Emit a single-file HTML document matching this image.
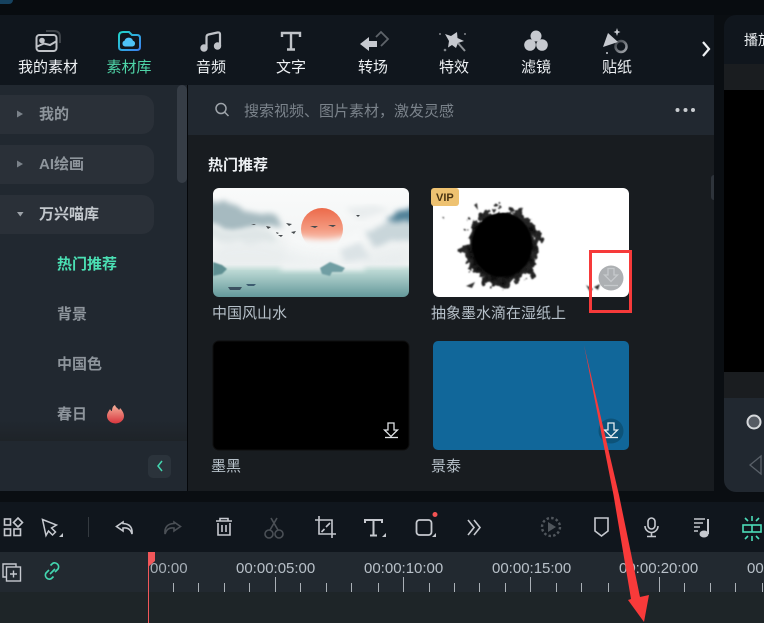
<!DOCTYPE html>
<html><head><meta charset="utf-8">
<style>
html,body{margin:0;padding:0;background:#0a0e12;}
#r{position:relative;width:764px;height:623px;overflow:hidden;background:#0a0e12;font-family:"Liberation Sans","Noto Sans CJK SC",sans-serif;}
.b{position:absolute;}
.t{position:absolute;white-space:nowrap;font-size:15px;line-height:20px;transform:translateX(-50%);color:#eef1f4;}
.l{position:absolute;white-space:nowrap;font-size:15px;line-height:20px;}
svg{position:absolute;left:0;top:0;}
</style></head><body><div id="r">
<div class="b" style="left:0;top:0;width:764px;height:15px;background:#080c10"></div>
<div class="b" style="left:0;top:0;width:13px;height:4px;background:#16425f;border-radius:0 0 8px 0"></div>
<div class="b" style="left:0;top:15px;width:714px;height:70px;background:#10161d"></div>
<div class="b" style="left:0;top:85px;width:187px;height:406px;background:linear-gradient(#212830 0,#212830 335px,#1e2328 356px)"></div>
<div class="b" style="left:187px;top:85px;width:1px;height:406px;background:#05070a"></div>
<div class="b" style="left:188px;top:85px;width:526px;height:50px;background:#212830"></div>
<div class="b" style="left:188px;top:135px;width:526px;height:356px;background:#181c20"></div>
<div class="b" style="left:724px;top:15px;width:40px;height:49px;background:#10161d;border-radius:12px 0 0 0"></div>
<div class="b" style="left:724px;top:64px;width:40px;height:26px;background:#1a1d20"></div>
<div class="b" style="left:724px;top:90px;width:40px;height:282px;background:#000"></div>
<div class="b" style="left:724px;top:372px;width:40px;height:26px;background:#1a1d20"></div>
<div class="b" style="left:724px;top:398px;width:40px;height:94px;background:#212830;border-radius:0 0 0 12px"></div>
<div class="b" style="left:0;top:502px;width:764px;height:50px;background:#10161d"></div>
<div class="b" style="left:0;top:552px;width:764px;height:40px;background:#222930"></div>
<div class="b" style="left:0;top:592px;width:764px;height:31px;background:#1e2528"></div>
<div class="b" style="left:0;top:95px;width:154px;height:39px;background:#2a3038;border-radius:0 12px 12px 0"></div>
<div class="b" style="left:0;top:145px;width:154px;height:39px;background:#2a3038;border-radius:0 12px 12px 0"></div>
<div class="b" style="left:0;top:195px;width:154px;height:39px;background:#2a3038;border-radius:0 12px 12px 0"></div>
<div class="b" style="left:177px;top:85px;width:10px;height:98px;background:#363d46;border-radius:5px"></div>
<div class="b" style="left:0;top:441px;width:187px;height:50px;background:#212830"></div>
<div class="b" style="left:148px;top:455px;width:23px;height:23px;background:#2b333b;border-radius:5px"></div>
<div class="b" style="left:711px;top:175px;width:3px;height:25px;background:#2e343b;border-radius:3px 0 0 3px"></div>

<div class="t" style="left:48px;top:58px">我的素材</div>
<div class="t" style="left:129px;top:58px;color:#4fd5a8">素材库</div>
<div class="t" style="left:211px;top:58px">音频</div>
<div class="t" style="left:291px;top:58px">文字</div>
<div class="t" style="left:373px;top:58px">转场</div>
<div class="t" style="left:454px;top:58px">特效</div>
<div class="t" style="left:536px;top:58px">滤镜</div>
<div class="t" style="left:617px;top:58px">贴纸</div>
<div class="l" style="left:744px;top:30px;color:#eef1f4;font-size:14px">播放</div>

<div class="l" style="left:39px;top:105px;color:#8e959c;font-weight:700">我的</div>
<div class="l" style="left:39px;top:155px;color:#8e959c;font-weight:700">AI绘画</div>
<div class="l" style="left:39px;top:205px;color:#c3c8cd;font-weight:700">万兴喵库</div>
<div class="l" style="left:57px;top:255px;color:#4be0b4;font-weight:700">热门推荐</div>
<div class="l" style="left:57px;top:305px;color:#8e959c;font-weight:700">背景</div>
<div class="l" style="left:57px;top:355px;color:#8e959c;font-weight:700">中国色</div>
<div class="l" style="left:57px;top:405px;color:#8e959c;font-weight:700">春日</div>

<div class="l" style="left:244px;top:102px;color:#7b838b">搜索视频、图片素材，激发灵感</div>
<div class="l" style="left:208px;top:156px;color:#eef1f4;font-weight:700">热门推荐</div>
<div class="l" style="left:212px;top:304px;color:#b6c0c9">中国风山水</div>
<div class="l" style="left:431px;top:304px;color:#b6c0c9">抽象墨水滴在湿纸上</div>
<div class="l" style="left:211px;top:457px;color:#b6c0c9">墨黑</div>
<div class="l" style="left:431px;top:457px;color:#b6c0c9">景泰</div>

<svg width="764" height="623" viewBox="0 0 764 623" style="z-index:1">
<defs>
<linearGradient id="sky" x1="0" y1="0" x2="0" y2="1"><stop offset="0" stop-color="#f9fafa"/><stop offset=".7" stop-color="#f0f3f3"/><stop offset=".74" stop-color="#c2ddd8"/><stop offset="1" stop-color="#63989a"/></linearGradient>
<linearGradient id="sun" x1="0" y1="0" x2="0" y2="1"><stop offset="0" stop-color="#ec6a4a"/><stop offset=".5" stop-color="#f49a80"/><stop offset="1" stop-color="#fbe5de"/></linearGradient>
<linearGradient id="fire" x1="0" y1="0" x2="0" y2="1"><stop offset="0" stop-color="#f4b09a"/><stop offset="1" stop-color="#d9363e"/></linearGradient>
<linearGradient id="cloud" x1="0" y1="0" x2="1" y2="1"><stop offset="0" stop-color="#21d4c8"/><stop offset="1" stop-color="#3b82f0"/></linearGradient>
<linearGradient id="ring" x1="0" y1="0" x2="1" y2="1"><stop offset="0" stop-color="#3a3f45"/><stop offset="1" stop-color="#a6aab0"/></linearGradient>
<radialGradient id="ink"><stop offset="0" stop-color="#050505"/><stop offset=".75" stop-color="#0d0d0d"/><stop offset="1" stop-color="#2d2d2d"/></radialGradient>
<filter id="bl1"><feGaussianBlur stdDeviation=".7"/></filter>
<filter id="bl3"><feGaussianBlur stdDeviation="3"/></filter>
<filter id="bl5"><feGaussianBlur stdDeviation="6"/></filter>
<filter id="cl" x="-30%" y="-30%" width="160%" height="160%"><feTurbulence type="fractalNoise" baseFrequency=".05" numOctaves="3" seed="4"/><feDisplacementMap in="SourceGraphic" scale="16" xChannelSelector="R" yChannelSelector="G"/><feGaussianBlur stdDeviation="3"/></filter>
<filter id="sp" x="-30%" y="-30%" width="160%" height="160%"><feTurbulence type="fractalNoise" baseFrequency=".11" numOctaves="3" seed="7"/><feDisplacementMap in="SourceGraphic" scale="24" xChannelSelector="R" yChannelSelector="G"/><feGaussianBlur stdDeviation=".9"/></filter>
<clipPath id="c1"><rect x="213" y="188" width="196" height="109" rx="6"/></clipPath>
<clipPath id="c2"><rect x="433" y="188" width="196" height="109" rx="6"/></clipPath>
</defs>
<g clip-path="url(#c1)">
<rect x="213" y="188" width="196" height="109" fill="url(#sky)"/>
<path d="M205 202L232 204L250 211L275 217L288 230L240 228L205 224Z" fill="#a6bac0" filter="url(#cl)"/>
<path d="M205 226L255 228L280 240L250 244L205 240Z" fill="#dfe6e7" filter="url(#cl)"/>
<path d="M415 212L392 216L380 226L366 234L372 244L415 240Z" fill="#c9d6da" filter="url(#cl)"/>
<path d="M415 206L396 210L387 218L400 222L415 220Z" fill="#4f8097" filter="url(#cl)"/>
<path d="M345 208L375 205L390 210L360 220Z" fill="#e9edee" filter="url(#bl3)"/>
<circle cx="322" cy="229" r="21" fill="url(#sun)"/>
<path d="M290 232Q300 240 322 240Q345 240 360 228L365 270H280Z" fill="#f6f8f8" filter="url(#bl3)"/>
<path d="M213 245Q260 232 300 255Q350 262 409 245L409 267L213 267Z" fill="#e6ebec" opacity=".7" filter="url(#bl5)"/>
<path d="M340 250L360 242L370 258L345 262Z" fill="#dbe3e6" filter="url(#bl3)"/>
<path d="M213 262L222 265L227 269L222 274L213 276Z" fill="#5f8f92" filter="url(#bl1)"/>
<path d="M320 268L330 262L338 265L345 268L342 272L332 272L330 276L322 274Z" fill="#6f9ea3" filter="url(#bl1)"/>
<g fill="#44494c"><path d="M286 223l6 1-3 2z"/><path d="M266 226l5 1-3 2z"/><path d="M276 232l3 1-2 1z"/><path d="M291 232l5-1-2 3z"/><path d="M278 235l5 0-2 2z"/><path d="M310 226l8 0-3 2z"/><path d="M328 225l8 0-3 2z"/><path d="M251 224l5 0-2 1z"/><path d="M356 215l4 0-2 2z"/></g>
<path d="M228 287h14l-2 3h-10z" fill="#3b5060"/><path d="M246 284h10l-2 2h-6z" fill="#3d5c70"/>
</g>
<g clip-path="url(#c2)">
<rect x="433" y="188" width="196" height="109" fill="#fff"/>
<ellipse cx="502" cy="247" rx="37" ry="39" fill="url(#ink)" filter="url(#sp)"/>
<ellipse cx="502" cy="245" rx="30" ry="32" fill="#060606" filter="url(#bl1)"/>
<path d="M466 286l9-4-3 6zM474 205l4 5-1-7zM586 285l7 4-3 3zM594 287l6-3-2 6zM442 217l2 0 0 2z" fill="#333" filter="url(#bl1)"/>
</g>
<rect x="431" y="188" width="28" height="18" rx="3" fill="#eec271"/>
<text x="436" y="201" font-family="Liberation Sans" font-weight="700" font-size="11" fill="#4a3412">VIP</text>
<rect x="213" y="341" width="196" height="109" rx="6" fill="#000" stroke="#0e0e0e"/>
<rect x="433" y="341" width="196" height="109" rx="5" fill="#11679a"/>
<circle cx="611" cy="278" r="12.5" fill="#adb0b3"/>
<g fill="none" stroke="#c6c9cc" stroke-width="1.3"><path d="M608 268.500h6v6.500h3.500l-6.500 6.500-6.500-6.500h3.500z"/><path d="M604 285.500h14"/></g>
<circle cx="611" cy="431" r="12.500" fill="#0d5379"/>
<g fill="none" stroke="#e6ecef" stroke-width="1.300"><path d="M608 423h6v7h3.500l-6.500 6.500-6.500-6.500h3.500z"/><path d="M604 437.500h14"/></g>
<g fill="none" stroke="#dfe2e5" stroke-width="1.300"><path d="M388 423h6v7h3.500l-6.500 6.500-6.500-6.500h3.500z"/><path d="M385 437.500h13"/></g>

<!-- top icons -->
<g fill="none" stroke="#c0c3c8" stroke-width="2">
<rect x="36.500" y="35" width="20" height="16" rx="3"/>
<circle cx="42" cy="40.500" r="1.800" fill="#c0c3c8"/>
<path d="M37 46.500L44 43.500L50 45L56 41.500"/>
<path d="M46 31h8q6 0 6 6v6" stroke="#3d4248"/>
</g>
<path d="M119 36q0-4 4-4h6l3 3h5q3 0 3 3v9q0 3-3 3h-15q-3 0-3-3z" fill="none" stroke="url(#cloud)" stroke-width="2"/>
<path d="M125 46.500a3 3 0 0 1-.500-5.800a4.500 4.500 0 0 1 8.500 0a3 3 0 0 1-.500 5.800z" fill="#4fc3f7"/>
<g fill="#c0c3c8"><circle cx="204" cy="48" r="3.700"/><circle cx="217.500" cy="46" r="3.700"/></g>
<path d="M206.500 48V37q0-2 2-2.500l9-2q2.500-.5 2.500 2V46" fill="none" stroke="#c0c3c8" stroke-width="2.200"/>
<path d="M282 37v-4h18v4M291 33v16M287 49.500h8" fill="none" stroke="#c0c3c8" stroke-width="2.400"/>
<path d="M376 37l5-5 7 7-7 7" fill="none" stroke="#5f646a" stroke-width="1.800"/>
<path d="M360 44L369 37V41H377V47H369V51Z" fill="#c6c9cf"/>
<path d="M445 34L451 36L457 32L457.500 38L464 41L458 43L456 48L452 45L448 47.500L449 41Z" fill="#c6c9cf"/>
<path d="M458 43l7 8" stroke="#8e9297" stroke-width="2"/>
<g fill="#7f8489"><circle cx="440" cy="34" r="1"/><circle cx="465" cy="34" r="1"/><circle cx="445" cy="50" r="1.300"/></g>
<g fill="#c6c9cf"><circle cx="536" cy="36" r="5.500"/><circle cx="530" cy="45" r="5.800"/><circle cx="542" cy="45" r="5.800"/></g>
<circle cx="621" cy="46.500" r="5.500" fill="none" stroke="url(#ring)" stroke-width="2.500"/>
<path d="M608 33L603 47L618 42Z" fill="#c6c9cf"/>
<path d="M617 28l1 3 2.500 1-2.500 1-1 3-1-3-2.500-1 2.500-1z" fill="#c6c9cf"/>
<circle cx="607" cy="53" r="1" fill="#c6c9cf"/>
<path d="M703 42l6 7-6 7" fill="none" stroke="#eef1f4" stroke-width="2.200"/>

<!-- sidebar icons -->
<path d="M17 110.500l6 3.500-6 3.500zM17 160.500l6 3.500-6 3.500z" fill="#7b828a"/><path d="M17 212h6.500l-3.200 4.500z" fill="#9ca2a8"/>
<path d="M115 405c1 3 3 3 4 5 1-1 1-2 1-2 3 3 4 6 4 8a8.500 7.500 0 0 1-17 0c0-3 2-5 3-7 .5 1 1 2 2 2 0-3 1-5 3-6z" fill="url(#fire)"/>
<path d="M162 461l-4 5 4 5" fill="none" stroke="#43d6b0" stroke-width="1.500"/>
<circle cx="221" cy="108.500" r="5" fill="none" stroke="#9ea4aa" stroke-width="1.500"/><path d="M224.500 112l4 4" stroke="#9ea4aa" stroke-width="1.500"/>
<g fill="#c8ccd0"><circle cx="677.500" cy="110" r="2"/><circle cx="685.500" cy="110" r="2"/><circle cx="693" cy="110" r="2"/></g>

<!-- right panel -->
<circle cx="754" cy="422" r="6.500" fill="#555b63" stroke="#d6d9dc" stroke-width="2"/>
<path d="M761 456v18l-11-9z" fill="none" stroke="#596068" stroke-width="1.300"/>

<!-- bottom toolbar -->
<g fill="none" stroke="#c6c9cf" stroke-width="1.600">
<rect x="4.500" y="519" width="6" height="6"/><path d="M18 518l4.500 4.500-4.500 4.500-4.500-4.500z"/><rect x="4.500" y="529" width="6" height="6.500"/><rect x="14" y="529" width="6.500" height="6.500"/>
<path d="M42.500 519.500L56.500 525L51.500 528L55.500 532L52.500 535L48.500 531L46 535.500Z" stroke-width="1.500"/>
<path d="M123 522l-6.500 4.500 6.500 4.500v-3q7-1 9 6 1-10-9-10.500z"/>
<path d="M174 522l6.500 4.500-6.500 4.500v-3q-7-1-9 6-1-10 9-10.500z" stroke="#4b5056"/>
<path d="M216 521h16M220 521v-2.500h8v2.500M218 523v12h12v-12M222 525v7M226 525v7"/>
<g stroke="#4b5056"><circle cx="269" cy="534" r="4"/><circle cx="279" cy="534" r="4"/><path d="M270 530l7-12M278 530l-7-12"/></g>
<path d="M319 516V534H336M315 520H332V538M321.500 532l3-3M326 527l4-4"/>
<path d="M365 523v-3h17v3M373.500 520v15M370 535.500h7" stroke-width="2"/>
<rect x="416.500" y="520" width="15" height="15" rx="3" stroke-width="1.800"/>
<path d="M468 520l6 7.500-6 7.500M474 520l6 7.500-6 7.500"/>
<circle cx="551" cy="527" r="9" stroke="#50565c" stroke-width="2.400" stroke-dasharray="2.500 2.200"/>
<path d="M595 518h13v13l-6.500 5-6.500-5z"/>
<rect x="648" y="518" width="7" height="11" rx="3.500"/><path d="M645 526a6.500 6.500 0 0 0 13 0M651.500 533v3M647 536.500h9"/>
<path d="M694 519h11M694 523h9M694 527h6M694 531h4"/>
</g>
<path d="M548 522l8 5-8 5z" fill="#50565c"/>
<path d="M708 519v15" stroke="#c6c9cf" stroke-width="2"/><ellipse cx="704" cy="534" rx="4.500" ry="3.500" fill="#c6c9cf"/>
<path d="M436 537h-4l4-4zM386 537h-4l4-4zM63 537h-4l4-4z" fill="#c6c9cf"/>
<circle cx="435" cy="514.500" r="2.500" fill="#f25353"/>
<rect x="88" y="517" width="1" height="20" fill="#343a40"/>
<g fill="none" stroke="#4cdcb8" stroke-width="1.600"><rect x="743" y="525" width="18" height="7"/><path d="M752 525v7M752 516v5M752 536v5M745 518l3 3M759 518l-3 3M745 539l3-3M759 539l-3-3"/></g>

<!-- ruler left -->
<g fill="none" stroke="#c6c9cf" stroke-width="1.400"><path d="M6 577H3V564h13v3"/><rect x="6.500" y="567" width="14" height="14" fill="#222930"/><path d="M10 574h7M13.500 570.500v7"/></g>
<path d="M49 570l-3 3a4 4 0 0 0 5.500 5.500l2-2M55 572l3-3a4 4 0 0 0-5.500-5.500l-2 2M50 574l5-5" fill="none" stroke="#43d6b0" stroke-width="1.700"/>
<g fill="#aab0b6">
<rect x="173" y="583" width="1" height="9"/><rect x="198" y="583" width="1" height="9"/><rect x="224" y="583" width="1" height="9"/><rect x="249" y="583" width="1" height="9"/><rect x="275" y="577" width="1" height="15"/><rect x="300" y="583" width="1" height="9"/><rect x="326" y="583" width="1" height="9"/><rect x="351" y="583" width="1" height="9"/><rect x="378" y="583" width="1" height="9"/><rect x="403" y="577" width="1" height="15"/><rect x="429" y="583" width="1" height="9"/><rect x="454" y="583" width="1" height="9"/><rect x="479" y="583" width="1" height="9"/><rect x="505" y="583" width="1" height="9"/><rect x="530" y="577" width="1" height="15"/><rect x="556" y="583" width="1" height="9"/><rect x="581" y="583" width="1" height="9"/><rect x="608" y="583" width="1" height="9"/><rect x="633" y="583" width="1" height="9"/><rect x="659" y="577" width="1" height="15"/><rect x="684" y="583" width="1" height="9"/><rect x="710" y="583" width="1" height="9"/><rect x="735" y="583" width="1" height="9"/><rect x="762" y="583" width="1" height="9"/>
</g>
<rect x="148" y="552" width="1" height="71" fill="#f2575a"/>
<path d="M148 552h7v9l-7 6z" fill="#f2575a"/>
<!-- annotations -->
<rect x="590.500" y="251.500" width="40" height="60" fill="none" stroke="#f63a3a" stroke-width="3"/>
</svg>
<div class="l" style="z-index:2;left:150px;top:559px;color:#a7afb7;">00:00</div>
<div class="l" style="z-index:2;left:236px;top:559px;color:#b8c0c8;">00:00:05:00</div>
<div class="l" style="z-index:2;left:364px;top:559px;color:#b8c0c8;">00:00:10:00</div>
<div class="l" style="z-index:2;left:492px;top:559px;color:#b8c0c8;">00:00:15:00</div>
<div class="l" style="z-index:2;left:619px;top:559px;color:#b8c0c8;">00:00:20:00</div>
<div class="l" style="z-index:2;left:747px;top:559px;color:#b8c0c8;">00:00:25:00</div>
<svg width="764" height="623" viewBox="0 0 764 623" style="z-index:3"><path d="M584 345L619 495L640 597L649 595L644 622L628 600L631 599L613.500 495Z" fill="#f83a3a"/></svg>
</div></body></html>
